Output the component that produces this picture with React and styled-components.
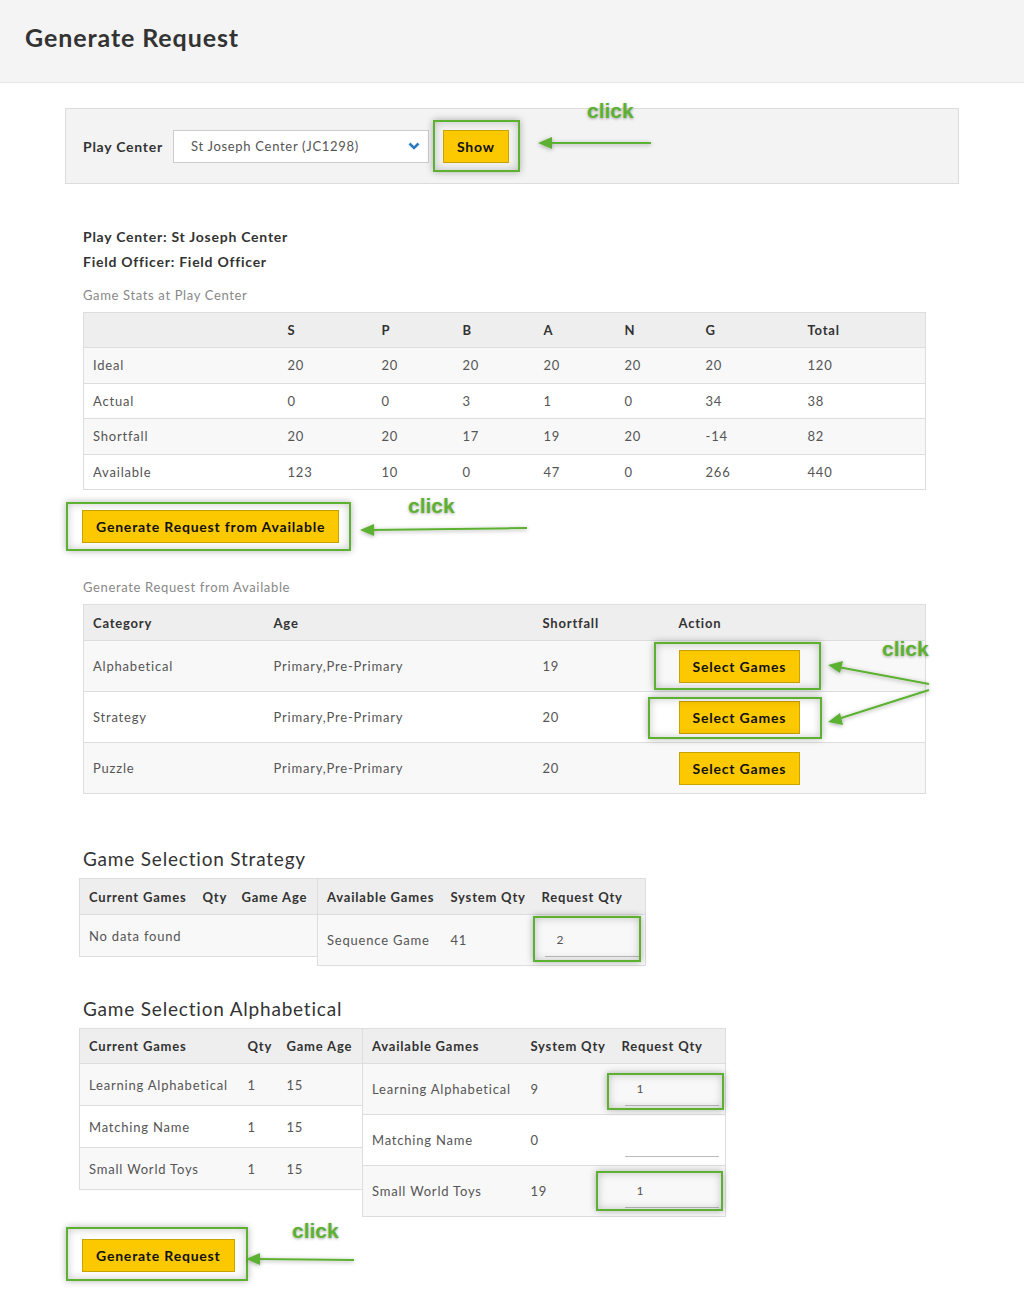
import React from "react";
import styled, { createGlobalStyle } from "styled-components";

const GlobalStyle = createGlobalStyle`
  body {
    margin: 0;
    background: #fff;
    font-family: Lato, "Open Sans", sans-serif;
    color: #333;
  }
`;

const statsCols = [195, 94, 81, 81, 81, 81, 102, 127];
const stats = [
  ["Ideal", "20", "20", "20", "20", "20", "20", "120"],
  ["Actual", "0", "0", "3", "1", "0", "34", "38"],
  ["Shortfall", "20", "20", "17", "19", "20", "-14", "82"],
  ["Available", "123", "10", "0", "47", "0", "266", "440"],
];

const categories = [
  { name: "Alphabetical", shortfall: "19", mark: { t: 8, r: 21, b: 7, l: 25 } },
  { name: "Strategy", shortfall: "20", mark: { t: 4, r: 22, b: 5, l: 31 } },
  { name: "Puzzle", shortfall: "20", mark: null },
];

const alphaCurrent = [
  ["Learning Alphabetical", "1", "15"],
  ["Matching Name", "1", "15"],
  ["Small World Toys", "1", "15"],
];

const alphaAvailable = [
  { name: "Learning Alphabetical", qty: "9", req: "1", mark: { t: 0, r: 5, b: 4, l: 15 } },
  { name: "Matching Name", qty: "0", req: "", mark: null },
  { name: "Small World Toys", qty: "19", req: "1", mark: { t: 4, r: 4, b: 3, l: 26 } },
];

function App() {
  return (
    <Page>
      <GlobalStyle />
      <Header>
        <PageTitle>Generate Request</PageTitle>
      </Header>

      <Main>
        <FilterBar>
          <FilterLabel>Play Center</FilterLabel>
          <SelectBox>
            <span>St Joseph Center (JC1298)</span>
            <svg width="12" height="8" viewBox="0 0 12 8">
              <path d="M1.5 1.5 L6 6 L10.5 1.5" fill="none" stroke="#2b7bbf" strokeWidth="2.6" />
            </svg>
          </SelectBox>
          <Mark $t={10} $r={11} $b={9} $l={10} $ml={14}>
            <YellowButton>Show</YellowButton>
          </Mark>
        </FilterBar>

        <Section>
          <InfoLine>Play Center: St Joseph Center</InfoLine>
          <InfoLine>Field Officer: Field Officer</InfoLine>
          <Caption>Game Stats at Play Center</Caption>
          <Table $width={842}>
            <colgroup>
              {statsCols.map((w, i) => (
                <col key={i} style={{ width: w }} />
              ))}
            </colgroup>
            <thead>
              <HeadRow $h={34}>
                {["", "S", "P", "B", "A", "N", "G", "Total"].map((h, i) => (
                  <Th key={i}>{h}</Th>
                ))}
              </HeadRow>
            </thead>
            <tbody>
              {stats.map((row) => (
                <Tr key={row[0]}>
                  {row.map((c, i) => (
                    <Td key={i}>{c}</Td>
                  ))}
                </Tr>
              ))}
            </tbody>
          </Table>

          <ButtonRow $mt={20}>
            <Mark $t={8} $r={12} $b={8} $l={16} $ml={-1}>
              <YellowButton>Generate Request from Available</YellowButton>
            </Mark>
          </ButtonRow>

          <Caption $mt={34}>Generate Request from Available</Caption>
          <Table $width={842}>
            <colgroup>
              <col style={{ width: 181 }} />
              <col style={{ width: 269 }} />
              <col style={{ width: 136 }} />
              <col style={{ width: 256 }} />
            </colgroup>
            <thead>
              <HeadRow $h={35}>
                <Th>Category</Th>
                <Th>Age</Th>
                <Th>Shortfall</Th>
                <Th>Action</Th>
              </HeadRow>
            </thead>
            <tbody>
              {categories.map((c) => (
                <Tr key={c.name}>
                  <Td $h={50}>{c.name}</Td>
                  <Td>Primary,Pre-Primary</Td>
                  <Td>{c.shortfall}</Td>
                  <ActionCell>
                    {c.mark ? (
                      <Mark $t={c.mark.t} $r={c.mark.r} $b={c.mark.b} $l={c.mark.l}>
                        <YellowButton>Select Games</YellowButton>
                      </Mark>
                    ) : (
                      <YellowButton>Select Games</YellowButton>
                    )}
                  </ActionCell>
                </Tr>
              ))}
            </tbody>
          </Table>
        </Section>

        <SubHeading $mt={52}>Game Selection Strategy</SubHeading>
        <TablePair>
          <Table $width={238}>
            <colgroup>
              <col style={{ width: 114 }} />
              <col style={{ width: 39 }} />
              <col style={{ width: 85 }} />
            </colgroup>
            <thead>
              <HeadRow $h={35}>
                <Th>Current Games</Th>
                <Th>Qty</Th>
                <Th>Game Age</Th>
              </HeadRow>
            </thead>
            <tbody>
              <Tr>
                <Td colSpan={3} $h={41}>No data found</Td>
              </Tr>
            </tbody>
          </Table>
          <Table $width={328} $joined>
            <colgroup>
              <col style={{ width: 124 }} />
              <col style={{ width: 91 }} />
              <col style={{ width: 113 }} />
            </colgroup>
            <thead>
              <HeadRow $h={35}>
                <Th>Available Games</Th>
                <Th>System Qty</Th>
                <Th>Request Qty</Th>
              </HeadRow>
            </thead>
            <tbody>
              <Tr>
                <Td $h={50}>Sequence Game</Td>
                <Td>41</Td>
                <Td>
                  <Mark $t={8} $r={2} $b={5} $l={9}>
                    <QtyInput defaultValue="2" />
                  </Mark>
                </Td>
              </Tr>
            </tbody>
          </Table>
        </TablePair>

        <SubHeading $mt={30}>Game Selection Alphabetical</SubHeading>
        <TablePair>
          <Table $width={283}>
            <colgroup>
              <col style={{ width: 159 }} />
              <col style={{ width: 39 }} />
              <col style={{ width: 85 }} />
            </colgroup>
            <thead>
              <HeadRow $h={34}>
                <Th>Current Games</Th>
                <Th>Qty</Th>
                <Th>Game Age</Th>
              </HeadRow>
            </thead>
            <tbody>
              {alphaCurrent.map((r) => (
                <Tr key={r[0]}>
                  <Td $h={41}>{r[0]}</Td>
                  <Td>{r[1]}</Td>
                  <Td>{r[2]}</Td>
                </Tr>
              ))}
            </tbody>
          </Table>
          <Table $width={363} $joined>
            <colgroup>
              <col style={{ width: 159 }} />
              <col style={{ width: 91 }} />
              <col style={{ width: 113 }} />
            </colgroup>
            <thead>
              <HeadRow $h={34}>
                <Th>Available Games</Th>
                <Th>System Qty</Th>
                <Th>Request Qty</Th>
              </HeadRow>
            </thead>
            <tbody>
              {alphaAvailable.map((r) => (
                <Tr key={r.name}>
                  <Td $h={50}>{r.name}</Td>
                  <Td>{r.qty}</Td>
                  <Td>
                    {r.mark ? (
                      <Mark $t={r.mark.t} $r={r.mark.r} $b={r.mark.b} $l={r.mark.l}>
                        <QtyInput defaultValue={r.req} />
                      </Mark>
                    ) : (
                      <QtyInput defaultValue={r.req} />
                    )}
                  </Td>
                </Tr>
              ))}
            </tbody>
          </Table>
        </TablePair>

        <ButtonRow $mt={22} $pl={17}>
          <Mark $t={12} $r={13} $b={9} $l={16}>
            <YellowButton>Generate Request</YellowButton>
          </Mark>
        </ButtonRow>
      </Main>

      <Arrows viewBox="0 0 1024 1306">
        <defs>
          <filter id="shade" x="-20%" y="-50%" width="140%" height="200%">
            <feDropShadow dx="0" dy="1" stdDeviation="2" floodColor="#000" floodOpacity="0.35" />
          </filter>
        </defs>
        <g filter="url(#shade)" stroke="#5cb130" strokeWidth="2" fill="#5cb130">
          <line x1="651" y1="143" x2="548" y2="143" />
          <polygon points="538,143 552,137 552,149" stroke="none" />
          <line x1="527" y1="528" x2="370" y2="530" />
          <polygon points="360,530 374,524 374,536" stroke="none" />
          <line x1="929" y1="684" x2="838" y2="667" />
          <polygon points="828,665 843,661 840,673" stroke="none" />
          <line x1="929" y1="690" x2="838" y2="719" />
          <polygon points="828,722 840,713 843,725" stroke="none" />
          <line x1="354" y1="1260" x2="256" y2="1259" />
          <polygon points="246,1259 260,1253 260,1265" stroke="none" />
        </g>
      </Arrows>
      <ClickNote $x={587} $y={99}>click</ClickNote>
      <ClickNote $x={408} $y={494}>click</ClickNote>
      <ClickNote $x={882} $y={637}>click</ClickNote>
      <ClickNote $x={292} $y={1219}>click</ClickNote>
    </Page>
  );
}

const Page = styled.div`
  position: relative;
  width: 1024px;
  min-height: 1306px;
`;

const Header = styled.header`
  height: 83px;
  background: #f4f4f4;
  border-bottom: 1px solid #e6e6e6;
  padding: 0 25px;
  box-sizing: border-box;
  display: flex;
  align-items: center;
`;

const PageTitle = styled.h1`
  margin: 0 0 8px;
  font-size: 25px;
  font-weight: 700;
  color: #333;
  letter-spacing: 0.9px;
`;

const Main = styled.main`
  padding: 25px 0 24px 65px;
`;

const FilterBar = styled.div`
  width: 894px;
  height: 76px;
  box-sizing: border-box;
  background: #f3f3f3;
  border: 1px solid #dcdcdc;
  display: flex;
  align-items: center;
  padding-left: 17px;
`;

const FilterLabel = styled.span`
  font-size: 14px;
  font-weight: 700;
  color: #333;
  margin-right: 10px;
  letter-spacing: 0.75px;
`;

const SelectBox = styled.div`
  width: 256px;
  height: 33px;
  box-sizing: border-box;
  background: #fff;
  border: 1px solid #ccc;
  display: flex;
  align-items: center;
  justify-content: space-between;
  padding: 0 8px 0 17px;
  font-size: 13px;
  color: #555;
  letter-spacing: 0.7px;
`;

const Mark = styled.span`
  position: relative;
  display: inline-block;
  vertical-align: middle;
  margin-left: ${(p) => p.$ml || 0}px;
  &::after {
    content: "";
    position: absolute;
    top: -${(p) => p.$t}px;
    right: -${(p) => p.$r}px;
    bottom: -${(p) => p.$b}px;
    left: -${(p) => p.$l}px;
    border: 2px solid #5cb130;
    box-shadow: 0 0 7px rgba(0, 0, 0, 0.3), inset 0 0 8px rgba(0, 0, 0, 0.22);
    pointer-events: none;
  }
`;

const YellowButton = styled.button`
  display: block;
  height: 33px;
  padding: 0 13px;
  background: #fcc800;
  border: 1px solid #c9a300;
  border-radius: 0;
  font-family: Lato, "Open Sans", sans-serif;
  font-size: 14px;
  font-weight: 700;
  letter-spacing: 0.8px;
  color: #111;
  cursor: pointer;
`;

const Section = styled.section`
  padding-left: 18px;
  margin-top: 40px;
`;

const InfoLine = styled.div`
  font-size: 14px;
  font-weight: 700;
  line-height: 25px;
  color: #333;
  letter-spacing: 0.75px;
`;

const Caption = styled.div`
  margin-top: ${(p) => p.$mt || 11}px;
  margin-bottom: 7px;
  font-size: 13px;
  line-height: 20px;
  color: #888;
  letter-spacing: 0.65px;
`;

const Table = styled.table`
  width: ${(p) => p.$width}px;
  border-collapse: collapse;
  table-layout: fixed;
  border: 1px solid #ddd;
  margin-left: ${(p) => (p.$joined ? -1 : 0)}px;
  font-size: 13px;
`;

const HeadRow = styled.tr`
  background: #eee;
  & > th {
    height: ${(p) => p.$h}px;
  }
`;

const Th = styled.th`
  padding: 0 9px;
  border-bottom: 1px solid #ddd;
  text-align: left;
  font-weight: 700;
  color: #333;
  letter-spacing: 0.8px;
  white-space: nowrap;
`;

const Tr = styled.tr`
  background: #fff;
  &:nth-child(odd) {
    background: #f8f8f8;
  }
`;

const Td = styled.td`
  height: ${(p) => p.$h || 34.5}px;
  padding: 0 9px;
  border-top: 1px solid #ddd;
  color: #555;
  letter-spacing: 0.8px;
  white-space: nowrap;
  vertical-align: middle;
`;

const ActionCell = styled.td`
  padding: 0 9px;
  border-top: 1px solid #ddd;
  line-height: 0;
  vertical-align: middle;
`;

const ButtonRow = styled.div`
  margin-top: ${(p) => p.$mt}px;
  padding-left: ${(p) => p.$pl || 0}px;
  line-height: 0;
`;

const SubHeading = styled.h2`
  margin: ${(p) => p.$mt}px 0 6px 18px;
  font-size: 19px;
  font-weight: 400;
  line-height: 26px;
  color: #333;
  letter-spacing: 0.8px;
`;

const TablePair = styled.div`
  display: flex;
  align-items: flex-start;
  margin-left: 14px;
`;

const QtyInput = styled.input`
  display: block;
  width: 94px;
  height: 33px;
  box-sizing: border-box;
  margin-left: 3px;
  padding: 0 12px;
  border: none;
  border-bottom: 1px solid #bbb;
  background: transparent;
  font-family: Lato, "Open Sans", sans-serif;
  font-size: 12px;
  color: #555;
  outline: none;
`;

const Arrows = styled.svg`
  position: absolute;
  top: 0;
  left: 0;
  width: 1024px;
  height: 1306px;
  pointer-events: none;
`;

const ClickNote = styled.div`
  position: absolute;
  left: ${(p) => p.$x}px;
  top: ${(p) => p.$y}px;
  font-family: "Liberation Sans", Arial, sans-serif;
  font-size: 21px;
  font-weight: 700;
  color: #5cb130;
  text-shadow: 0 1px 3px rgba(0, 0, 0, 0.35);
  pointer-events: none;
`;

export default App;
